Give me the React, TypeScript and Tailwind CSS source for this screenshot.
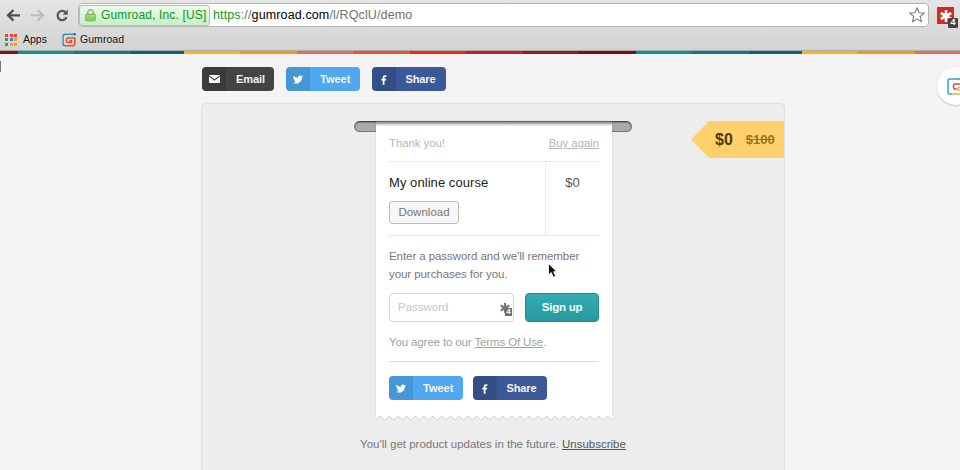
import React from "react";

const stripes: [number, string][] = [
  [18, "#8e1112"], [56, "#0b9299"], [57, "#087d82"], [53, "#07676b"],
  [56, "#fbb416"], [57, "#f69a0b"], [56, "#ee695b"], [57, "#ef5138"],
  [56, "#f42b0b"], [57, "#cf1733"], [56, "#a51217"], [57, "#840b0b"],
  [56, "#0b9299"], [57, "#087d82"], [53, "#07676b"], [56, "#fbb416"],
  [57, "#f69a0b"], [45, "#ee695b"],
];

const appColors = ["#e8403a", "#e8403a", "#e8403a", "#2fa558", "#3f80dc", "#f0a01e", "#2fa558", "#f0a01e", "#f0a01e"];

const MailIcon = () => (
  <svg width="11" height="8" viewBox="0 0 11 8">
    <rect width="11" height="8" rx="0.8" fill="#fff" />
    <path d="M0.300 1 5.500 5 10.700 1" fill="none" stroke="#444" strokeWidth="1.100" />
    <path d="M0.600 7.300 3.300 4.400M10.400 7.300 7.700 4.400" fill="none" stroke="#aaa" strokeWidth="0.500" />
  </svg>
);

const BirdIcon = () => (
  <svg width="10" height="9" viewBox="0 2 24 20" fill="#fff">
    <path d="M24 4.600a10 10 0 0 1-2.800.8 5 5 0 0 0 2.100-2.700 10 10 0 0 1-3.100 1.200 4.900 4.900 0 0 0-8.400 4.500A14 14 0 0 1 1.700 3.100a4.900 4.900 0 0 0 1.500 6.600 5 5 0 0 1-2.200-.6v.1a4.900 4.900 0 0 0 3.900 4.800 5 5 0 0 1-2.200.1 4.900 4.900 0 0 0 4.600 3.400A9.900 9.900 0 0 1 0 19.500a14 14 0 0 0 21.500-12.400A10 10 0 0 0 24 4.600z" />
  </svg>
);

const FbIcon = () => (
  <svg className="relative top-px" width="6" height="10" viewBox="0 0 7 11" fill="#fff">
    <path d="M2 11V6.100H.4V4.100H2V2.800C2 1 3.100 0 4.700 0c.7 0 1.300.1 1.500.1v1.800H5.100C4.300 1.900 4.100 2.300 4.100 2.900v1.200h2L5.800 6.100H4.100V11z" />
  </svg>
);

const social = {
  Email: { icon: <MailIcon />, left: "bg-[#3b3b3b]", right: "bg-[#444444]", pad: "pl-[10px] tracking-[-0.1px]" },
  Tweet: { icon: <BirdIcon />, left: "bg-[#4697d5]", right: "bg-[#50a9f0]", pad: "pl-[10px]" },
  Share: { icon: <FbIcon />, left: "bg-[#344f88]", right: "bg-[#3b5998]", pad: "pl-[10px] tracking-[-0.1px]" },
};

function Social({ kind, width }: { kind: keyof typeof social; width: string }) {
  const s = social[kind];
  return (
    <button className={`flex h-6 shrink-0 overflow-hidden rounded-[4px] text-[11px] font-bold text-[#f4f4f4] ${width}`}>
      <span className={`flex h-full w-[24px] items-center justify-center ${s.left}`}>{s.icon}</span>
      <span className={`flex h-full flex-1 items-center ${s.right} ${s.pad}`}>{kind}</span>
    </button>
  );
}

const Asterisk = ({ color, size }: { color: string; size: number }) => (
  <svg width={size} height={size} viewBox="0 0 12 12" stroke={color} strokeWidth="2.600">
    <path d="M6 0v12M0.800 3 11.200 9M11.200 3 0.800 9" />
  </svg>
);

function Toolbar() {
  return (
    <header className="h-[51px] overflow-hidden border-b border-[#a9aaaa] bg-linear-to-b from-[#e5e5e5] to-[#d3d3d3]">
      <div className="flex h-[27px] items-start pt-[3px]">
        <svg className="mt-[3px] ml-[6px]" width="64" height="18" viewBox="6 6 64 18" fill="none">
          <path d="M20 15.300H8.500M13.500 10 8 15.300l5.500 5.300" stroke="#505050" strokeWidth="2.300" />
          <path d="M30.500 15.300H42.500M37.500 10l5.500 5.300-5.500 5.300" stroke="#bcbcbc" strokeWidth="2.100" />
          <path d="M65.800 12.700A4.600 4.600 0 1 0 66.500 17.200" stroke="#585858" strokeWidth="2.200" />
          <path d="M67.800 9.500v5.200h-5.200z" fill="#585858" />
        </svg>
        <div className="ml-[8px] flex h-[24px] w-[851px] items-center rounded-[4px] border border-[#b5b5b5] bg-white">
          <div className="flex h-[21px] w-[131px] items-center rounded-[3px] border border-[#9ed29a] bg-linear-to-b from-[#eefaec] to-[#c8efc5]">
            <svg className="ml-[5px]" width="11" height="14" viewBox="0 0 12 14">
              <path d="M3 7V4.200a3 3 0 0 1 6 0V7" fill="none" stroke="#a5aaa2" strokeWidth="1.700" />
              <rect x="0.700" y="6" width="10.600" height="7.500" rx="1" fill="#90cc68" stroke="#6daa4a" strokeWidth="0.700" />
              <path d="M1 8h10" stroke="#bce59b" />
            </svg>
            <span className="ml-[5px] whitespace-nowrap text-[12px] tracking-[0.15px] text-[#0b9819]">Gumroad, Inc. [US]</span>
          </div>
          <span className="ml-[3px] whitespace-nowrap text-[12.500px] tracking-[0.13px] text-[#707070]">
            <span className="text-[#0b9819]">https</span>://<span className="text-black">gumroad.com</span>/l/RQclU/demo
          </span>
          <svg className="mr-[3px] ml-auto" width="16" height="16" viewBox="0 0 16 16" fill="#fff" stroke="#808080" strokeWidth="1.100" strokeLinejoin="round">
            <path d="M8 .8l2 5 5.400.3-4.200 3.400 1.400 5.300L8 11.900l-4.600 2.900 1.400-5.300L.6 6.100 6 5.800z" />
          </svg>
        </div>
        <div className="relative mt-[4px] ml-[8px] flex size-[17px] shrink-0 items-center justify-center bg-[#d8281d]">
          <Asterisk color="#fff" size={12} />
          <span className="absolute top-[11px] left-[11px] flex h-[10px] w-[10px] items-center justify-center rounded-[1px] bg-[#444] text-[9px] font-bold text-white">4</span>
        </div>
      </div>
      <div className="flex h-[24px] items-center pt-px text-[10.500px] text-[#111]">
        <div className="ml-[5px] grid grid-cols-3 gap-[1.500px]">
          {appColors.map((c, i) => <span key={i} className="size-[3px]" style={{ background: c }} />)}
        </div>
        <span className="ml-[6px] w-[24px]">Apps</span>
        <svg className="ml-[15px]" width="14" height="14" viewBox="0 0 14 14" fill="none">
          <path d="M13 1.300H3.200Q1 1.300 1 3.500V10.500Q1 12.800 3.500 12.800" stroke="#2b9ab0" strokeWidth="1.500" />
          <path d="M3 12.800H10.500Q12.800 12.800 12.800 10.500V5H6.200Q4.500 5 4.500 6.500V8Q4.500 9.500 6 9.500H9.500V7.800H7.500" stroke="#e2512f" strokeWidth="1.500" />
          <circle cx="12.700" cy="1.300" r="1.300" fill="#256caf" />
        </svg>
        <span className="ml-[4px] tracking-[0.05px]">Gumroad</span>
      </div>
    </header>
  );
}

const toothWidth = 236 / 27;
const teeth = Array.from({ length: 27 }, (_, i) => `L${(236 - (i + 0.5) * toothWidth).toFixed(2)} 0.500L${(236 - (i + 1) * toothWidth).toFixed(2)} 4.500`).join("");

function Receipt() {
  return (
    <div className="mx-auto flex h-[300px] w-[278px] flex-col items-center">
      <div className="h-[11px] w-[278px] shrink-0 rounded-full border border-[#777] border-t-[#4c4c4c] bg-[#aaa] shadow-[inset_0_1px_1px_#777]" />
      <div className="relative left-px -mt-[11px] flex h-[294px] w-[236px] shrink-0 flex-col border-t border-[#666] bg-white px-[13px] shadow-[0_0_2px_rgba(0,0,0,0.12)]">
        <div className="absolute inset-x-0 top-0 h-[4px] bg-linear-to-b from-[#888] to-white" />
        <div className="flex h-[40px] items-center justify-between border-b border-dotted border-[#dadada] pt-[5px] text-[11.500px] text-[#b5b5b5]">
          <span className="tracking-[-0.1px]">Thank you!</span>
          <a className="tracking-[-0.1px] underline">Buy again</a>
        </div>
        <div className="flex h-[74px] border-b border-dotted border-[#dadada]">
          <div className="w-[157px] border-r border-dotted border-[#dadada] pt-[12px]">
            <div className="text-[13px] leading-[18px] tracking-[0.06px] whitespace-nowrap text-[#222]">My online course</div>
            <button className="mt-[9px] h-[23px] w-[70px] rounded-[3px] border border-[#bcbcbc] bg-[#f7f7f7] text-[11.500px] text-[#777]">Download</button>
          </div>
          <div className="flex-1 pt-[12px] text-center text-[13px] leading-[18px] text-[#555]">$0</div>
        </div>
        <p className="mt-[11px] text-[11.500px] leading-[18px] tracking-[-0.07px] whitespace-nowrap text-[#777]">
          Enter a password and we'll remember<br />your purchases for you.
        </p>
        <div className="mt-[10px] flex h-[29px] shrink-0 justify-between">
          <div className="flex w-[125px] items-center justify-between rounded-[4px] border border-[#d4d4d4] pl-[8px] text-[11.500px] text-[#c4c4c4]">
            <span>Password</span>
            <span className="relative mr-[3px]">
              <Asterisk color="#777" size={10} />
              <span className="absolute top-[5px] left-[5px] flex h-[8px] w-[7px] items-center justify-center bg-[#6d6d6d] text-[8px] font-bold text-white">4</span>
            </span>
          </div>
          <button className="w-[74px] rounded-[4px] border border-[#23898e] bg-linear-to-b from-[#32adb2] to-[#289aa0] text-[11.500px] font-bold tracking-[-0.25px] text-[#f5ffff]">Sign up</button>
        </div>
        <div className="mt-[10px] h-[20px] text-[11.500px] leading-[20px] tracking-[-0.13px] whitespace-nowrap text-[#a2a2a2]">
          You agree to our <a className="underline">Terms Of Use</a>.
        </div>
        <div className="mt-[9px] border-t border-[#dadada]" />
        <div className="mt-[14px] flex gap-[9.500px]">
          <Social kind="Tweet" width="w-[74px]" />
          <Social kind="Share" width="w-[74px]" />
        </div>
      </div>
      <svg className="relative left-px shrink-0" width="236" height="6" viewBox="0 0 236 6">
        <path d={`M0 0H236V4.500${teeth}Z`} fill="#cfcfcf" transform="translate(0 1)" />
        <path d={`M0 0H236V4.500${teeth}Z`} fill="#fff" />
      </svg>
    </div>
  );
}

// Pointer resting over the password prompt.
const Cursor = () => (
  <svg className="absolute top-[208px] left-[547px]" width="12" height="18" viewBox="0 0 12 18">
    <path d="M1.500 1.500V13L4.200 10.500 6.300 15.200 8.700 14.200 6.600 9.700H10z" fill="#111" stroke="#fff" strokeWidth="0.900" />
  </svg>
);

export default function App() {
  return (
    <div className="h-[470px] w-[960px] overflow-hidden bg-[#f4f4f4] font-['Liberation_Sans',Arial,sans-serif]">
      <Toolbar />
      <div className="flex h-[3px]">
        {stripes.map(([w, c], i) => <div key={i} className="shrink-0" style={{ width: w, background: c }} />)}
      </div>
      <div className="relative h-[416px]">
        <div className="absolute top-[7px] left-0 h-[11px] w-px bg-[#777]" />
        <div className="absolute top-[13px] left-[937px] flex size-[38px] items-center rounded-full bg-white pl-[10px] shadow-[0_1px_2px_rgba(0,0,0,0.2)]">
          <svg className="shrink-0" width="24" height="17" viewBox="0 0 24 17" fill="none">
            <path d="M10 1H2.500Q1 1 1 2.500V14.500Q1 16 2.500 16H5" stroke="#35a8b5" strokeWidth="1.500" />
            <path d="M10 1H24" stroke="#3c89c2" strokeWidth="1.500" />
            <path d="M5 16H24" stroke="#eda35b" strokeWidth="1.500" />
            <path d="M15 6H8Q6.500 6 6.500 7.500V9.500Q6.500 11 8 11H10" stroke="#db4a30" strokeWidth="1.500" />
            <path d="M11 9.500h4M11 9.500v2.500h3" stroke="#f19a3a" strokeWidth="1.200" />
          </svg>
        </div>
        <div className="flex gap-[12px] pt-[13px] pl-[202px]">
          <Social kind="Email" width="w-[72px]" />
          <Social kind="Tweet" width="w-[73.500px]" />
          <Social kind="Share" width="w-[74px]" />
        </div>
        <main className="mt-[13px] ml-[202px] h-[380px] w-[582px]">
          <div className="relative h-full rounded-[4px] bg-[#ededed] pt-[17px] shadow-[0_0_2px_rgba(0,0,0,0.28)]">
            <Receipt />
            <div className="absolute top-[17px] right-0 flex h-[37px] w-[93px] items-center bg-[#ffd06b] pl-[24px] [clip-path:polygon(0_50%,18px_0,100%_0,100%_100%,18px_100%)]">
              <span className="text-[16px] font-bold text-[#4e3b0b]">$0</span>
              <span className="ml-[13px] text-[13px] font-bold text-[#967324] line-through">$100</span>
            </div>
            <p className="mt-[13px] text-center text-[11.500px] leading-[20px] text-[#777]">
              You'll get product updates in the future. <a className="text-[#555] underline">Unsubscribe</a>
            </p>
          </div>
        </main>
        <Cursor />
      </div>
    </div>
  );
}
